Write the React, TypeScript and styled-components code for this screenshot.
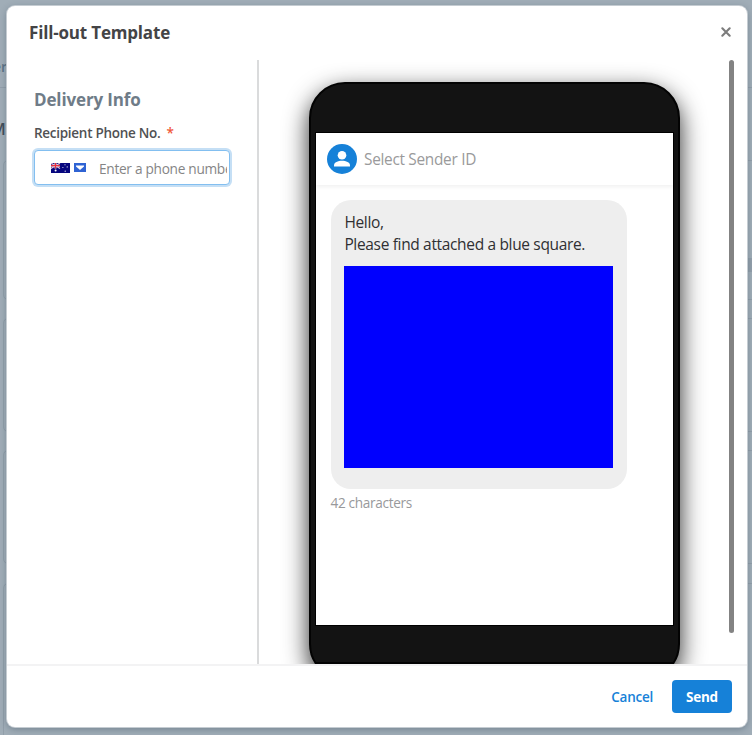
import React from 'react';
import styled, { createGlobalStyle } from 'styled-components';

const GlobalStyle = createGlobalStyle`
  * { box-sizing: border-box; }
  html, body { margin: 0; padding: 0; }
  body { font-family: "Open Sans", "Noto Sans", sans-serif; overflow: hidden; color: #404145; }
  button { font-family: inherit; border: 0; background: none; padding: 0; cursor: pointer; }
`;

const Page = styled.main`
  position: relative;
  width: 752px;
  height: 735px;
  overflow: hidden;
  background: #a0adb7;
  padding: 6px 5px 8px 7px;
`;

const Backdrop = styled.div`
  position: absolute;
  inset: 0;
`;

const BackdropText = styled.span<{ $top: number; $left: number; $color: string; $size: number }>`
  position: absolute;
  top: ${(p) => p.$top}px;
  left: ${(p) => p.$left}px;
  font-size: ${(p) => p.$size}px;
  line-height: 20px;
  font-weight: 600;
  color: ${(p) => p.$color};
`;

const BackdropRule = styled.div<{ $top: number }>`
  position: absolute;
  top: ${(p) => p.$top}px;
  left: 0;
  right: 0;
  height: 1px;
  background: #929faa;
`;

const BackdropCard = styled.div<{ $top: number; $height: number }>`
  position: absolute;
  top: ${(p) => p.$top}px;
  left: 3px;
  width: 800px;
  height: ${(p) => p.$height}px;
  border: 1px solid #929faa;
  border-radius: 5px;
`;

const BackdropBand = styled.div`
  position: absolute;
  top: 258px;
  right: 0;
  width: 5px;
  height: 14px;
  background: #93a0ab;
`;

const Dialog = styled.section`
  position: relative;
  display: flex;
  flex-direction: column;
  height: 721px;
  border-radius: 8px;
  background: #fff;
  box-shadow: 0 0 0 1px #c5ccd2, 0 2px 7px rgba(40, 60, 80, 0.4);
`;

const Header = styled.header`
  display: flex;
  justify-content: space-between;
  align-items: center;
  flex: none;
  height: 54px;
  padding: 0 15px 0 22px;
`;

const Title = styled.h1`
  margin: 0;
  font-size: 17px;
  line-height: 24px;
  font-weight: 700;
  letter-spacing: -0.18px;
  color: #444446;
`;

const CloseButton = styled.button`
  width: 12px;
  height: 12px;
  margin-top: -2px;
  svg { display: block; }
`;

const Body = styled.div`
  display: flex;
  flex: none;
  height: 604px;
  overflow: hidden;
`;

const FormPane = styled.div`
  width: 252px;
  flex: none;
  padding: 28px 27px 0;
  border-right: 2px solid #dadbdc;
`;

const SectionTitle = styled.h2`
  margin: 0;
  font-size: 17px;
  line-height: 24px;
  font-weight: 700;
  letter-spacing: -0.14px;
  color: #6f7c88;
`;

const Label = styled.label`
  display: block;
  margin-top: 11px;
  font-size: 13.5px;
  line-height: 20px;
  font-weight: 600;
  letter-spacing: -0.28px;
  white-space: nowrap;
  color: #505153;
`;

const Required = styled.span`
  margin-left: 6px;
  color: #f0593a;
`;

const PhoneField = styled.div`
  display: flex;
  align-items: center;
  width: 196px;
  height: 35px;
  margin-top: 7px;
  padding: 0 2px 0 16px;
  border: 1px solid #83bff0;
  border-radius: 4px;
  box-shadow: 0 0 0 2px #c5dff5;
  background: #fff;
`;

const Flag = styled.svg`
  flex: none;
  width: 19px;
  height: 10px;
`;

const Chevron = styled.svg`
  flex: none;
  width: 12px;
  height: 9px;
  margin-left: 4px;
`;

const PhoneInput = styled.input`
  flex: 1;
  min-width: 0;
  margin-left: 13px;
  padding: 2px 0 0;
  border: 0;
  outline: 0;
  background: transparent;
  font: 400 13.7px/20px "Open Sans", "Noto Sans", sans-serif;
  letter-spacing: -0.3px;
  &::placeholder { color: #858585; opacity: 1; }
`;

const PreviewPane = styled.div`
  flex: 1;
  padding: 22px 0 0 50px;
  overflow: hidden;
`;

const Phone = styled.div`
  width: 371px;
  height: 598px;
  padding: 49px 5px 0;
  border: 2px solid #030303;
  border-radius: 36px;
  background: #131313;
  box-shadow: 0 9px 24px rgba(0, 0, 0, 0.85);
`;

const Screen = styled.div`
  width: 357px;
  height: 492px;
  background: #fff;
  outline: 1px solid #000;
`;

const PhoneSeam = styled.div`
  height: 2px;
  margin-top: 37px;
  background: #030303;
`;

const Sender = styled.div`
  display: flex;
  align-items: center;
  height: 52px;
  padding-left: 11px;
  gap: 7px;
  font-size: 15.4px;
  line-height: 22px;
  letter-spacing: -0.3px;
  color: #9a9a9b;
  box-shadow: 0 2px 4px rgba(0, 0, 0, 0.06);
`;

const SenderName = styled.span`
  padding-top: 2px;
`;

const Message = styled.div`
  width: 296px;
  height: 289px;
  margin: 15px 0 0 15px;
  padding: 11px 14px 0 13.4px;
  border-radius: 20px;
  background: #eee;
  font-size: 15.5px;
  line-height: 22px;
  letter-spacing: -0.34px;
  color: #303032;
`;

const MessageLine = styled.p`
  margin: 0;
  white-space: nowrap;
`;

const Attachment = styled.div`
  width: 268.6px;
  height: 202px;
  margin-top: 11px;
  background: #0000fe;
`;

const CharacterCount = styled.div`
  margin: 4px 0 0 14.5px;
  font-size: 13.6px;
  line-height: 20px;
  letter-spacing: -0.32px;
  color: #98999b;
`;

const Scrollbar = styled.div`
  flex: none;
  width: 5px;
  height: 573px;
  margin-right: 13px;
  border-radius: 3px;
  background: #838383;
`;

const Footer = styled.footer`
  display: flex;
  justify-content: flex-end;
  align-items: center;
  gap: 19px;
  flex: 1;
  padding: 0 15px 0 0;
  border-top: 2px solid #f3f3f4;
`;

const ActionButton = styled.button<{ $primary?: boolean }>`
  height: 33px;
  width: ${(p) => (p.$primary ? '60px' : 'auto')};
  border-radius: 4px;
  font-size: 13.5px;
  letter-spacing: -0.25px;
  font-weight: ${(p) => (p.$primary ? 700 : 600)};
  color: ${(p) => (p.$primary ? '#fff' : '#1681d8')};
  background: ${(p) => (p.$primary ? '#1681d8' : 'transparent')};
`;

const cards = [
  { top: 160, height: 140 },
  { top: 318, height: 114 },
  { top: 450, height: 114 },
  { top: 583, height: 170 },
];

function AustralianFlag() {
  return (
    <Flag viewBox="0 0 19 10" aria-label="Australia">
      <path fill="#06067e" d="M0 0h19v10H0z" />
      <path stroke="#e6c9d8" strokeWidth="1.1" d="m0 0 9 5.5M9 0 0 5.5" />
      <path stroke="#f4dce2" strokeWidth="2" d="M4.5 0v5.5M0 2.7h9" />
      <path stroke="#e8303f" strokeWidth="1.2" d="M4.5 0v5.5M0 2.7h9" />
      <g fill="#fff">
        <circle cx="4.6" cy="7.6" r="1" />
        <circle cx="14" cy="1.8" r=".55" />
        <circle cx="11.9" cy="4.5" r=".55" />
        <circle cx="16.2" cy="3.9" r=".55" />
        <circle cx="14.2" cy="8.2" r=".6" />
      </g>
    </Flag>
  );
}

export default function App() {
  return (
    <Page>
      <GlobalStyle />
      <Backdrop aria-hidden="true">
        <BackdropText $top={57} $left={-7} $color="#5e7487" $size={14}>er</BackdropText>
        <BackdropText $top={119} $left={-9} $color="#424e5a" $size={16}>M</BackdropText>
        <BackdropRule $top={87} />
        {cards.map((card) => (
          <BackdropCard key={card.top} $top={card.top} $height={card.height} />
        ))}
        <BackdropBand />
      </Backdrop>
      <Dialog role="dialog" aria-label="Fill-out Template">
        <Header>
          <Title>Fill-out Template</Title>
          <CloseButton aria-label="Close">
            <svg width="12" height="12" viewBox="0 0 12 12">
              <path d="m2.3 2.3 7.4 7.4m0-7.4L2.3 9.7" stroke="#7c7c7c" strokeWidth="2.1" strokeLinecap="round" />
            </svg>
          </CloseButton>
        </Header>
        <Body>
          <FormPane>
            <SectionTitle>Delivery Info</SectionTitle>
            <Label htmlFor="recipient">
              Recipient Phone No.<Required>*</Required>
            </Label>
            <PhoneField>
              <AustralianFlag />
              <Chevron viewBox="0 0 12 9">
                <path fill="#2f63d3" d="M0 0h12v9H0z" />
                <path fill="#fff" d="M2 2.4h8v1.2L6 6.9 2 3.6z" />
              </Chevron>
              <PhoneInput id="recipient" placeholder="Enter a phone number" />
            </PhoneField>
          </FormPane>
          <PreviewPane>
            <Phone>
              <Screen>
                <Sender>
                  <svg width="30" height="30" viewBox="0 0 30 30">
                    <circle cx="15" cy="15" r="15" fill="#1681d8" />
                    <circle cx="15" cy="11.3" r="4.3" fill="#fff" />
                    <path fill="#fff" d="M7 22.5v-1.2c0-2.9 4-4.5 8-4.5s8 1.6 8 4.5v1.2z" />
                  </svg>
                  <SenderName>Select Sender ID</SenderName>
                </Sender>
                <Message>
                  <MessageLine>Hello,</MessageLine>
                  <MessageLine>Please find attached a blue square.</MessageLine>
                  <Attachment role="img" aria-label="Blue square" />
                </Message>
                <CharacterCount>42 characters</CharacterCount>
              </Screen>
              <PhoneSeam />
            </Phone>
          </PreviewPane>
          <Scrollbar />
        </Body>
        <Footer>
          <ActionButton>Cancel</ActionButton>
          <ActionButton $primary>Send</ActionButton>
        </Footer>
      </Dialog>
    </Page>
  );
}
